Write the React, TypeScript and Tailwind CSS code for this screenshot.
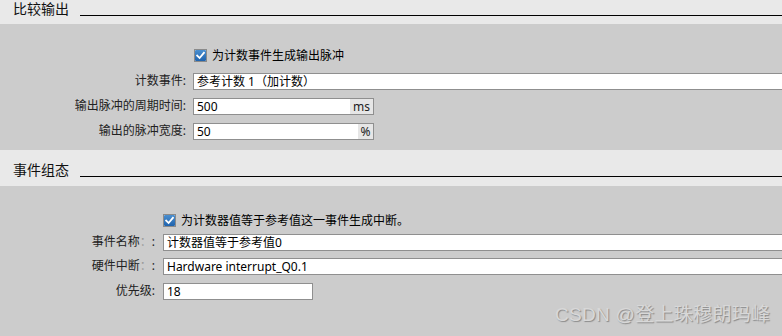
import React from "react";

const font = { fontFamily: '"Segoe UI", "Noto Sans", "Noto Sans CJK SC", sans-serif' };

function Check() {
  return (
    <span className="flex h-[13px] w-[13px] shrink-0 items-center justify-center border border-[#8a8a8a] bg-white">
      <span className="flex h-[11px] w-[11px] items-center justify-center rounded-[1px] bg-gradient-to-b from-[#4a8fd0] to-[#1f63ad]">
        <svg width="9" height="9" viewBox="0 0 9 9">
          <path d="M1.2 4.6 L3.6 7 L7.9 1.8" fill="none" stroke="#ffffff" strokeWidth="1.8" strokeLinecap="square" />
        </svg>
      </span>
    </span>
  );
}

function Header({ title, top }: { title: string; top: string }) {
  return (
    <div className={`flex bg-[#e9e9e9] pl-[13px] ${top}`}>
      <span className="text-[14px] leading-[16px] text-[#111]">{title}</span>
      <div className="ml-[11px] h-[15px] flex-1 border-b border-black" />
    </div>
  );
}

function Input({ value, unit, w, unitW }: { value: string; unit?: string; w?: string; unitW?: string }) {
  return (
    <div className={`flex h-[17px] border border-[#8f8f8f] bg-white ${w ?? "mr-[-4px] flex-1"}`}>
      <span className="flex-1 pl-[3px] text-[12px] leading-[15px] text-black">{value}</span>
      {unit && (
        <span className={`flex items-center justify-center bg-[#e6e6e6] text-[12px] leading-[15px] text-[#222] ${unitW}`}>
          {unit}
        </span>
      )}
    </div>
  );
}

export default function App() {
  return (
    <div className="h-[336px] w-[782px] overflow-hidden bg-[#cccccc]" style={font}>
      <Header title="比较输出" top="h-[24px] pt-[1px]" />
      <div className="flex h-[126px] flex-col pt-[25px]">
        <div className="mb-[10px] flex h-[13px] items-center pl-[194px]">
          <Check />
          <span className="ml-[5px] text-[12px] leading-[13px] text-black">为计数事件生成输出脉冲</span>
        </div>
        <div className="mb-[7px] flex items-center">
          <span className="w-[186px] text-right text-[12px] text-[#222]">计数事件:</span>
          <span className="w-[7px]" />
          <Input value="参考计数 1（加计数）" />
        </div>
        <div className="mb-[7px] flex items-center">
          <span className="w-[186px] text-right text-[12px] text-[#222]">输出脉冲的周期时间:</span>
          <span className="w-[7px]" />
          <Input value="500" unit="ms" w="w-[181px]" unitW="w-[23px]" />
        </div>
        <div className="flex items-center">
          <span className="w-[186px] text-right text-[12px] text-[#222]">输出的脉冲宽度:</span>
          <span className="w-[7px]" />
          <Input value="50" unit="%" w="w-[181px]" unitW="w-[15px]" />
        </div>
      </div>
      <Header title="事件组态" top="h-[36px] pt-[12px]" />
      <div className="relative flex h-[150px] flex-col pt-[28px]">
        <div className="mb-[6px] flex h-[13px] items-center pl-[163px]">
          <Check />
          <span className="ml-[5px] text-[12px] leading-[13px] text-black">为计数器值等于参考值这一事件生成中断。</span>
        </div>
        <div className="mb-[6px] flex items-center">
          <span className="w-[155px] text-right text-[12px] text-[#222]">
            事件名称<span className="text-[#9a9a9a]">：</span>:
          </span>
          <span className="w-[8px]" />
          <Input value="计数器值等于参考值0" />
        </div>
        <div className="mb-[7px] flex items-center">
          <span className="w-[155px] text-right text-[12px] text-[#222]">
            硬件中断<span className="text-[#9a9a9a]">：</span>:
          </span>
          <span className="w-[8px]" />
          <Input value="Hardware interrupt_Q0.1" />
        </div>
        <div className="flex items-center">
          <span className="w-[155px] text-right text-[12px] text-[#222]">优先级:</span>
          <span className="w-[8px]" />
          <Input value="18" w="w-[150px]" />
        </div>
        <span
          className="absolute left-[555px] top-[118px] text-[19px] leading-[22px] tracking-[0.3px] text-[#d8d8d8]"
          style={{ textShadow: "1px 1px 1px #8a8a8a", fontFamily: '"Liberation Sans", "Noto Sans CJK SC", sans-serif' }}
        >
          CSDN @登上珠穆朗玛峰
        </span>
      </div>
    </div>
  );
}
